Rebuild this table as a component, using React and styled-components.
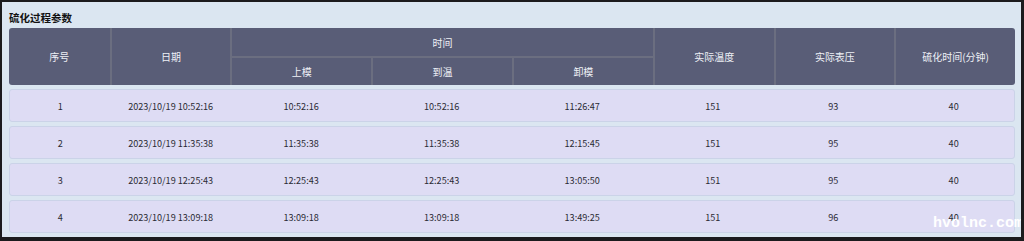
import React from "react";
import styled, { createGlobalStyle } from "styled-components";

const Global = createGlobalStyle`
  html, body { margin: 0; padding: 0; background: #1b1b1d; }
  body { font-family: "Noto Sans CJK SC", "Noto Sans", sans-serif; }
  * { box-sizing: border-box; }
`;

const COLS = [10, 12, 14, 14, 14, 12, 12, 12];

const Frame = styled.div`
  width: 1024px;
  height: 241px;
  border-style: solid;
  border-color: #1b1b1d;
  border-width: 2px 3px 4px 2px;
  background: #dbe6f1;
  position: relative;
  overflow: hidden;
`;

const Panel = styled.div`
  padding: 7px 6px 0 7px;
  display: flex;
  flex-direction: column;
`;

const Title = styled.div`
  font-size: 10.5px;
  font-weight: 700;
  color: #111;
  line-height: 14px;
  height: 19px;
  padding-top: 2px;
`;

const Head = styled.div`
  background: #595d77;
  border-radius: 3px;
  display: grid;
  grid-template-columns: ${COLS.map((c) => c + "%").join(" ")};
  grid-template-rows: 28px 29px;
  color: #eef0f6;
  font-size: 10px;
  overflow: hidden;
`;

const HCell = styled.div`
  display: flex;
  align-items: center;
  justify-content: center;
  grid-column: ${(p) => p.$col};
  grid-row: ${(p) => p.$row};
  border-left: ${(p) => (p.$first ? "none" : "2px solid #6b6e80")};
  border-top: ${(p) => (p.$sub ? "2px solid #6b6e80" : "none")};
`;

const Rows = styled.div`
  display: flex;
  flex-direction: column;
  gap: 4px;
  margin-top: 4px;
`;

const Row = styled.div`
  display: grid;
  grid-template-columns: ${COLS.map((c) => c + "%").join(" ")};
  height: 33px;
  background: #dedcf4;
  border: 1px solid #cbd3e8;
  border-radius: 3px;
  font-size: 9.1px;
  color: #2a2a33;
`;

const Cell = styled.div`
  display: flex;
  align-items: center;
  justify-content: center;
`;

const Watermark = styled.div`
  position: absolute;
  right: -2px;
  bottom: 5px;
  font-family: "Liberation Mono", monospace;
  font-weight: 700;
  font-size: 15px;
  color: #ffffff;
`;

const data = [
  ["1", "2023/10/19 10:52:16", "10:52:16", "10:52:16", "11:26:47", "151", "93", "40"],
  ["2", "2023/10/19 11:35:38", "11:35:38", "11:35:38", "12:15:45", "151", "95", "40"],
  ["3", "2023/10/19 12:25:43", "12:25:43", "12:25:43", "13:05:50", "151", "95", "40"],
  ["4", "2023/10/19 13:09:18", "13:09:18", "13:09:18", "13:49:25", "151", "96", "40"],
];

export default function App() {
  return (
    <>
      <Global />
      <Frame>
        <Panel>
          <Title>硫化过程参数</Title>
          <Head>
            <HCell $col="1" $row="1 / 3" $first>序号</HCell>
            <HCell $col="2" $row="1 / 3">日期</HCell>
            <HCell $col="3 / 6" $row="1">时间</HCell>
            <HCell $col="3" $row="2" $sub>上模</HCell>
            <HCell $col="4" $row="2" $sub>到温</HCell>
            <HCell $col="5" $row="2" $sub>卸模</HCell>
            <HCell $col="6" $row="1 / 3">实际温度</HCell>
            <HCell $col="7" $row="1 / 3">实际表压</HCell>
            <HCell $col="8" $row="1 / 3">硫化时间(分钟)</HCell>
          </Head>
          <Rows>
            {data.map((r) => (
              <Row key={r[0]}>
                {r.map((v, i) => (
                  <Cell key={i}>{v}</Cell>
                ))}
              </Row>
            ))}
          </Rows>
        </Panel>
        <Watermark>hvolnc.com</Watermark>
      </Frame>
    </>
  );
}
